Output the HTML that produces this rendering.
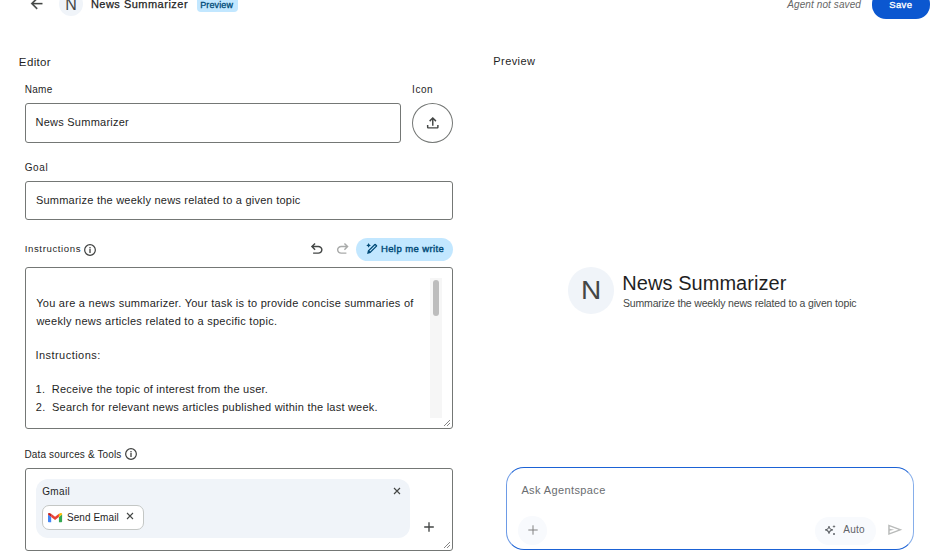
<!DOCTYPE html>
<html><head><meta charset="utf-8"><style>
html,body{margin:0;padding:0;width:946px;height:556px;overflow:hidden;background:#fff;}
body{position:relative;font-family:"Liberation Sans",sans-serif;}
.t{position:absolute;white-space:nowrap;}
</style></head><body>
<svg style="position:absolute;left:27.5px;top:-4.55px;" width="17.2" height="17.2" viewBox="0 -960 960 960" preserveAspectRatio="none"><path fill="#444746" stroke="#444746" stroke-width="14" d="M313-440l224 224-57 56-320-320 320-320 57 56-224 224h487v80H313Z"/></svg>
<div style="position:absolute;left:59px;top:-8px;width:24px;height:24px;box-sizing:border-box;border-radius:50%;background:#f0f4f9;"></div>
<div class="t" style="left:65.19px;top:-3.00px;font-size:16px;line-height:16px;color:#444746;font-weight:normal;font-style:normal;letter-spacing:0.000px;">N</div>
<div class="t" style="left:90.90px;top:-1.00px;font-size:11px;line-height:11px;color:#1f1f1f;font-weight:normal;font-style:normal;letter-spacing:0.488px;-webkit-text-stroke:0.25px #1f1f1f;">News Summarizer</div>
<div style="position:absolute;left:197px;top:-4px;width:41px;height:15.5px;box-sizing:border-box;border-radius:4px;background:#c2e7ff;"></div>
<div class="t" style="left:200.26px;top:1.00px;font-size:9px;line-height:9px;color:#004a77;font-weight:normal;font-style:normal;letter-spacing:0.116px;-webkit-text-stroke:0.3px #004a77;">Preview</div>
<div class="t" style="left:787.29px;top:0.00px;font-size:10px;line-height:10px;color:#666666;font-weight:normal;font-style:italic;letter-spacing:0.098px;">Agent not saved</div>
<div style="position:absolute;left:872px;top:-10px;width:58px;height:28.6px;box-sizing:border-box;border-radius:14px;background:#0b57d0;"></div>
<div class="t" style="left:889.17px;top:0.00px;font-size:9.5px;line-height:9.5px;color:#ffffff;font-weight:normal;font-style:normal;letter-spacing:0.398px;-webkit-text-stroke:0.35px #fff;">Save</div>
<div class="t" style="left:18.86px;top:57.00px;font-size:11.5px;line-height:11.5px;color:#1f1f1f;font-weight:normal;font-style:normal;letter-spacing:0.358px;">Editor</div>
<div class="t" style="left:24.68px;top:85.00px;font-size:10px;line-height:10px;color:#1f1f1f;font-weight:normal;font-style:normal;letter-spacing:0.330px;">Name</div>
<div class="t" style="left:412.08px;top:85.00px;font-size:10px;line-height:10px;color:#1f1f1f;font-weight:normal;font-style:normal;letter-spacing:0.523px;">Icon</div>
<div style="position:absolute;left:25px;top:103px;width:376px;height:40px;box-sizing:border-box;border:1px solid #747775;border-radius:3px;"></div>
<div class="t" style="left:35.50px;top:117.00px;font-size:11px;line-height:11px;color:#1f1f1f;font-weight:normal;font-style:normal;letter-spacing:0.245px;">News Summarizer</div>
<div style="position:absolute;left:412px;top:103px;width:41px;height:40px;box-sizing:border-box;border:1px solid #747775;border-radius:50%;"></div>
<svg style="position:absolute;left:423.9px;top:114.1px;" width="17.55" height="17.55" viewBox="0 -960 960 960" preserveAspectRatio="none"><path fill="#444746" d="M440-320v-326L336-542l-56-58 200-200 200 200-56 58-104-104v326h-80ZM240-160q-33 0-56.5-23.5T160-240v-120h80v120h480v-120h80v120q0 33-23.5 56.5T720-160H240Z"/></svg>
<div class="t" style="left:24.70px;top:163.00px;font-size:10px;line-height:10px;color:#1f1f1f;font-weight:normal;font-style:normal;letter-spacing:0.650px;">Goal</div>
<div style="position:absolute;left:25px;top:181px;width:428px;height:39px;box-sizing:border-box;border:1px solid #747775;border-radius:3px;"></div>
<div class="t" style="left:35.91px;top:195.00px;font-size:11px;line-height:11px;color:#1f1f1f;font-weight:normal;font-style:normal;letter-spacing:0.230px;">Summarize the weekly news related to a given topic</div>
<div class="t" style="left:24.72px;top:244.00px;font-size:9.6px;line-height:9.6px;color:#1f1f1f;font-weight:normal;font-style:normal;letter-spacing:0.613px;">Instructions</div>
<svg style="position:absolute;left:83.95px;top:243.7px;" width="12" height="12" viewBox="0 0 12 12" preserveAspectRatio="none"><circle cx="6" cy="6" r="5.35" fill="none" stroke="#3f4140" stroke-width="1.2"/><circle cx="6" cy="3.7" r="0.8" fill="#3f4140"/><rect x="5.35" y="5.0" width="1.3" height="4.0" fill="#3f4140"/></svg>
<svg style="position:absolute;left:308px;top:240px;" width="17.5" height="17.5" viewBox="0 0 24 24" preserveAspectRatio="none"><path fill="#444746" d="M7 19v-2h7.1q1.575 0 2.738-1T18 13.5q0-1.5-1.162-2.5T14.1 10H7.8l2.6 2.6L9 14 4 9l5-5 1.4 1.4L7.8 8h6.3q2.425 0 4.163 1.575T20 13.5q0 2.35-1.737 3.925T14.1 19H7Z"/></svg>
<svg style="position:absolute;left:333.6px;top:240px;" width="17.5" height="17.5" viewBox="0 0 24 24" preserveAspectRatio="none"><path fill="#a9abaa" d="M9.9 19q-2.425 0-4.162-1.575T4 13.5q0-2.35 1.738-3.925T9.9 8h6.3l-2.6-2.6L15 4l5 5-5 5-1.4-1.4 2.6-2.6H9.9q-1.575 0-2.737 1T6 13.5q0 1.5 1.163 2.5T9.9 17H17v2H9.9Z"/></svg>
<div style="position:absolute;left:356px;top:238px;width:97px;height:23px;box-sizing:border-box;border-radius:12px;background:#c2e7ff;"></div>
<svg style="position:absolute;left:366px;top:243.3px;" width="13" height="12" viewBox="0 0 13 12" preserveAspectRatio="none"><g transform="translate(1.1 10.9) rotate(-45) scale(1.12)"><path fill="#004a77" d="M0 0L2.6-1.6H10.9Q11.7-1.6 11.7-.8V.8Q11.7 1.6 10.9 1.6H2.6Z"/><path fill="#c2e7ff" d="M3.4-.45H10.5V.45H3.4Z"/></g><path fill="#004a77" d="M2.6 .1Q2.9 2.1 4.9 2.4Q2.9 2.7 2.6 4.7Q2.3 2.7 .3 2.4Q2.3 2.1 2.6 .1Z"/></svg>
<div class="t" style="left:380.92px;top:244.00px;font-size:9.5px;line-height:9.5px;color:#004a77;font-weight:normal;font-style:normal;letter-spacing:0.410px;-webkit-text-stroke:0.4px #004a77;">Help me write</div>
<div style="position:absolute;left:25px;top:267px;width:428px;height:162px;box-sizing:border-box;border:1px solid #747775;border-radius:3px;"></div>
<div class="t" style="left:36.16px;top:298px;font-size:11px;line-height:11px;color:#1f1f1f;letter-spacing:0.268px;white-space:pre">You are a news summarizer. Your task is to provide concise summaries of</div>
<div class="t" style="left:36.41px;top:316px;font-size:11px;line-height:11px;color:#1f1f1f;letter-spacing:0.274px;white-space:pre">weekly news articles related to a specific topic.</div>
<div class="t" style="left:35.39px;top:350px;font-size:11px;line-height:11px;color:#1f1f1f;letter-spacing:0.468px;white-space:pre">Instructions:</div>
<div class="t" style="left:35.56px;top:384px;font-size:11px;line-height:11px;color:#1f1f1f;letter-spacing:0.234px;white-space:pre">1.  Receive the topic of interest from the user.</div>
<div class="t" style="left:35.85px;top:402px;font-size:11px;line-height:11px;color:#1f1f1f;letter-spacing:0.224px;white-space:pre">2.  Search for relevant news articles published within the last week.</div>
<div style="position:absolute;left:429.6px;top:278px;width:12.2px;height:140px;box-sizing:border-box;background:#f6f6f6;"></div>
<div style="position:absolute;left:433px;top:280px;width:6px;height:36px;box-sizing:border-box;background:#bdbdbd;border-radius:3px;"></div>
<svg style="position:absolute;left:443px;top:418.7px;" width="8" height="8" viewBox="0 0 8 8" preserveAspectRatio="none"><path stroke="#777" stroke-width="0.9" d="M1 7L7 1M4 7L7 4"/></svg>
<div class="t" style="left:24.48px;top:450.00px;font-size:10px;line-height:10px;color:#1f1f1f;font-weight:normal;font-style:normal;letter-spacing:0.135px;">Data sources &amp; Tools</div>
<svg style="position:absolute;left:125.05px;top:448px;" width="12" height="12" viewBox="0 0 12 12" preserveAspectRatio="none"><circle cx="6" cy="6" r="5.35" fill="none" stroke="#3f4140" stroke-width="1.2"/><circle cx="6" cy="3.7" r="0.8" fill="#3f4140"/><rect x="5.35" y="5.0" width="1.3" height="4.0" fill="#3f4140"/></svg>
<div style="position:absolute;left:25px;top:468px;width:428px;height:83px;box-sizing:border-box;border:1px solid #747775;border-radius:3px;"></div>
<div style="position:absolute;left:36px;top:479px;width:374px;height:59px;box-sizing:border-box;border-radius:12px;background:#f0f4f9;"></div>
<div class="t" style="left:42.20px;top:487.00px;font-size:10px;line-height:10px;color:#1f1f1f;font-weight:normal;font-style:normal;letter-spacing:0.365px;">Gmail</div>
<svg style="position:absolute;left:392.7px;top:487.4px;" width="8" height="8" viewBox="0 0 8 8" preserveAspectRatio="none"><path stroke="#444746" stroke-width="1.15" d="M1 1L7 7M7 1L1 7"/></svg>
<div style="position:absolute;left:42px;top:505px;width:102px;height:25px;box-sizing:border-box;border:1px solid #c4c7c5;border-radius:7px;background:#fff;"></div>
<svg style="position:absolute;left:47.9px;top:512.7px;overflow:visible" width="14.1" height="9.3" viewBox="0 0 20 13" preserveAspectRatio="none"><path fill="#4285f4" d="M0 2.2v9.3c0 .8.6 1.5 1.5 1.5h3V5.6z"/><path fill="#34a853" d="M15.5 5.6V13h3c.8 0 1.5-.7 1.5-1.5V2.2z"/><path fill="#ea4335" d="M4.5 5.6L10 9.7l5.5-4.1V1L10 5.1 4.5 1z"/><path fill="#fbbc04" d="M15.5 1v4.6L20 2.2V1.5C20 .1 18.4-.6 17.3.2z"/><path fill="#c5221f" d="M0 1.5v.7l4.5 3.4V1L2.7.2C1.6-.6 0 .1 0 1.5z"/></svg>
<div class="t" style="left:66.95px;top:513.00px;font-size:10px;line-height:10px;color:#1f1f1f;font-weight:normal;font-style:normal;letter-spacing:0.064px;">Send Email</div>
<svg style="position:absolute;left:126.4px;top:512.4px;" width="8" height="8" viewBox="0 0 8 8" preserveAspectRatio="none"><path stroke="#444746" stroke-width="1.1" d="M1 1L7 7M7 1L1 7"/></svg>
<svg style="position:absolute;left:423.4px;top:521px;" width="12" height="12" viewBox="0 0 12 12" preserveAspectRatio="none"><path stroke="#444746" stroke-width="1.35" d="M6 1.2V10.8M1.2 6H10.8"/></svg>
<svg style="position:absolute;left:443px;top:540.7px;" width="8" height="8" viewBox="0 0 8 8" preserveAspectRatio="none"><path stroke="#777" stroke-width="0.9" d="M1 7L7 1M4 7L7 4"/></svg>
<div class="t" style="left:493.30px;top:56.00px;font-size:11px;line-height:11px;color:#1f1f1f;font-weight:normal;font-style:normal;letter-spacing:0.424px;">Preview</div>
<div style="position:absolute;left:567.8px;top:267.4px;width:46.5px;height:46.5px;box-sizing:border-box;border-radius:50%;background:#f0f4f9;"></div>
<div class="t" style="left:581.31px;top:278.00px;font-size:25.5px;line-height:25.5px;color:#444746;font-weight:normal;font-style:normal;letter-spacing:0.000px;transform:scaleX(1.1);transform-origin:0 0;">N</div>
<div class="t" style="left:622.36px;top:273.00px;font-size:20px;line-height:20px;color:#1f1f1f;font-weight:normal;font-style:normal;letter-spacing:0.043px;">News Summarizer</div>
<div class="t" style="left:623.03px;top:298.00px;font-size:10.5px;line-height:10.5px;color:#444746;font-weight:normal;font-style:normal;letter-spacing:-0.165px;">Summarize the weekly news related to a given topic</div>
<div style="position:absolute;left:506px;top:467px;width:408px;height:83px;box-sizing:border-box;border:1px solid #1b62d5;border-left-color:#6d9be6;border-right-color:#86aeea;border-radius:18px;"></div>
<div class="t" style="left:521.38px;top:485.00px;font-size:11px;line-height:11px;color:#6a6d70;font-weight:normal;font-style:normal;letter-spacing:0.387px;">Ask Agentspace</div>
<div style="position:absolute;left:518px;top:516px;width:28.5px;height:28.5px;box-sizing:border-box;border-radius:50%;background:#f8fafd;"></div>
<svg style="position:absolute;left:526.5px;top:523.5px;" width="12" height="12" viewBox="0 0 12 12" preserveAspectRatio="none"><path stroke="#808080" stroke-width="1" d="M6 1.3V10.7M1.3 6H10.7"/></svg>
<div style="position:absolute;left:815px;top:516.5px;width:61.4px;height:28px;box-sizing:border-box;border-radius:14px;background:#f8fafd;"></div>
<svg style="position:absolute;left:824px;top:523px;" width="13" height="13" viewBox="0 0 13 13" preserveAspectRatio="none"><path fill="none" stroke="#5f6368" stroke-width="1.1" stroke-linejoin="miter" d="M5 3.0Q5.35 6.55 8.9 6.9Q5.35 7.25 5 10.8Q4.65 7.25 1.1 6.9Q4.65 6.55 5 3.0Z"/><path fill="#5f6368" d="M10 1.8l.45 1.25 1.25.45-1.25.45-.45 1.25-.45-1.25-1.25-.45 1.25-.45z"/><circle fill="#5f6368" cx="10" cy="11" r="1.0"/></svg>
<div class="t" style="left:843.18px;top:525.00px;font-size:10px;line-height:10px;color:#5f6368;font-weight:normal;font-style:normal;letter-spacing:0.290px;">Auto</div>
<svg style="position:absolute;left:886.1px;top:522.0px;overflow:visible" width="17.8" height="15.5" viewBox="0 -960 960 960" preserveAspectRatio="none"><path fill="#b9bbba" d="M120-160v-640l760 320-760 320Zm80-120 474-200-474-200v140l240 60-240 60v140Z"/></svg>
</body></html>
